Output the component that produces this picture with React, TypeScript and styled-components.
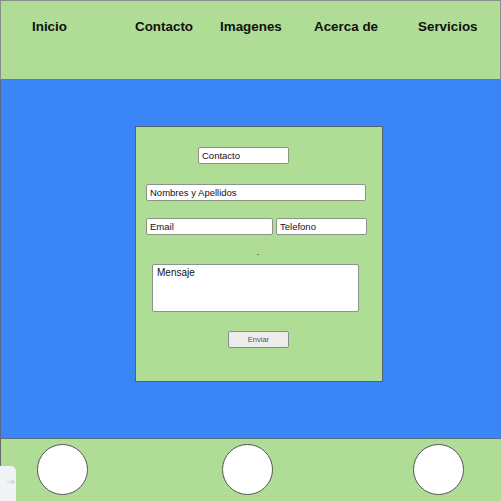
import React from "react"
import styled, { createGlobalStyle } from "styled-components"

const GlobalStyle = createGlobalStyle`
  html, body {
    margin: 0;
    padding: 0;
    width: 501px;
    height: 501px;
    overflow: hidden;
    background: #afdd95;
    font-family: "Liberation Sans", Arial, sans-serif;
  }
`

const links = ["Inicio", "Contacto", "Imagenes", "Acerca de", "Servicios"]

const App = () => {
  return (
    <>
      <GlobalStyle />
      <Page>
        <Header>
          <Nav>
            {links.map((l) => (
              <NavLink key={l}>{l}</NavLink>
            ))}
          </Nav>
        </Header>
        <Main>
          <Card>
            <Field $left={62} $top={20} $width={91}>
              Contacto
            </Field>
            <Field $left={10} $top={20} $width={220}>
              Nombres y Apellidos
            </Field>
            <Row $left={10} $top={17}>
              <Field $width={127}>Email</Field>
              <Field $width={91}>Telefono</Field>
            </Row>
            <Dot />
            <Message>Mensaje</Message>
            <Button>Enviar</Button>
          </Card>
        </Main>
        <Footer>
          <Circle />
          <Circle />
          <Circle />
        </Footer>
        <Corner>⇥</Corner>
      </Page>
    </>
  )
}

export default App

const Page = styled.div`
  width: 501px;
  height: 501px;
  display: flex;
  flex-direction: column;
  position: relative;
  overflow: hidden;
`

const Header = styled.header`
  height: 80px;
  flex-shrink: 0;
  box-sizing: border-box;
  background: #afdd95;
  border: 1px solid #8c8c8c;
  border-bottom: 1px solid #6d7d6a;
`

const Nav = styled.nav`
  display: grid;
  grid-template-columns: 103px 85px 94px 104px auto;
  padding: 17px 0 0 31px;
`

const NavLink = styled.span`
  font-size: 13.4px;
  font-weight: bold;
  color: #111;
  line-height: 17px;
`

const Main = styled.main`
  height: 358px;
  flex-shrink: 0;
  background: #3b86f6;
  padding: 46px 0 0 134px;
  box-sizing: border-box;
  border-left: 1px solid #5a6a80;
`

const Card = styled.div`
  width: 248px;
  height: 256px;
  box-sizing: border-box;
  background: #afdd95;
  border: 1px solid #556070;
  display: flex;
  flex-direction: column;
  align-items: flex-start;
`

const Field = styled.div<{ $left?: number; $top?: number; $width: number }>`
  margin-left: ${(p) => p.$left ?? 0}px;
  margin-top: ${(p) => p.$top ?? 0}px;
  width: ${(p) => p.$width}px;
  height: 17px;
  box-sizing: border-box;
  background: #fff;
  border: 1px solid #8a9488;
  border-radius: 2px;
  font-size: 9.5px;
  line-height: 15px;
  padding-left: 3px;
  color: #111;
`

const Row = styled.div<{ $left: number; $top: number }>`
  display: flex;
  gap: 3px;
  margin-left: ${(p) => p.$left}px;
  margin-top: ${(p) => p.$top}px;
`

const Dot = styled.div`
  width: 2px;
  height: 1px;
  background: #6a7a68;
  margin: 19px 0 0 121px;
`

const Message = styled.div`
  width: 207px;
  height: 48px;
  box-sizing: border-box;
  margin: 9px 0 0 16px;
  background: #fff;
  border: 1px solid #8a9488;
  border-radius: 2px;
  font-size: 10px;
  padding: 2px 0 0 4px;
  color: #111;
`

const Button = styled.div`
  width: 61px;
  height: 17px;
  box-sizing: border-box;
  margin: 19px 0 0 92px;
  background: #ececec;
  border: 1px solid #8a8a8a;
  border-radius: 2px;
  font-size: 7.5px;
  line-height: 15px;
  text-align: center;
  color: #555;
`

const Footer = styled.footer`
  flex: 1;
  background: #afdd95;
  border-top: 1px solid #5a6e7a;
  border-left: 1px solid #6a6a6a;
  display: grid;
  grid-template-columns: 185px 191px auto;
  padding: 5px 0 0 36px;
`

const Circle = styled.div`
  width: 51px;
  height: 51px;
  box-sizing: border-box;
  border-radius: 50%;
  background: #fff;
  border: 1px solid #555;
`

const Corner = styled.div`
  position: absolute;
  left: -6px;
  top: 466px;
  width: 22px;
  height: 40px;
  border-radius: 5px;
  background: #f2f3f6;
  color: #d0d0d8;
  font-size: 10px;
  text-align: right;
  padding: 10px 2px 0 0;
  box-sizing: border-box;
`
